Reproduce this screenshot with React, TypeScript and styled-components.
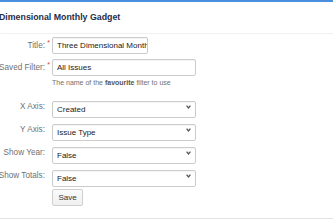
import React from "react";
import styled, { createGlobalStyle } from "styled-components";

const Global = createGlobalStyle`
  html, body { margin: 0; padding: 0; background: #ffffff; }
  body { font-family: "Liberation Sans", Arial, sans-serif; }
  * { box-sizing: border-box; }
`;

const Gadget = styled.div`
  width: 333px;
  height: 222px;
  overflow: hidden;
  display: flex;
  flex-direction: column;
  background: #ffffff;
`;

const Header = styled.div`
  height: 34px;
  flex: none;
  border-top: 2px solid #4a8fdf;
  border-bottom: 1px solid #f0f1f3;
  display: flex;
  align-items: center;
  padding-bottom: 1px;
`;

const Title = styled.h2`
  margin: 0 0 0 -1px;
  font-size: 8.8px;
  font-weight: 700;
  color: #1f2d4a;
  white-space: nowrap;
`;

const Form = styled.form`
  flex: none;
  display: flex;
  flex-direction: column;
  padding: 3px 0 12px 0;
  border-bottom: 1px solid #e2e2e2;
  box-shadow: 0 1px 2px rgba(0, 0, 0, 0.06);
`;

const Row = styled.div<{ $mt?: number }>`
  display: flex;
  align-items: center;
  height: 17px;
  margin-top: ${(p) => p.$mt ?? 0}px;
`;

const Label = styled.label`
  position: relative;
  width: 45px;
  flex: none;
  display: flex;
  justify-content: flex-end;
  font-size: 8.2px;
  line-height: 10px;
  padding-top: 1px;
  color: #707070;
  white-space: nowrap;
  margin-right: 7px;
`;

const Required = styled.span`
  position: absolute;
  right: -5px;
  top: -2px;
  font-size: 7px;
  color: #d04437;
`;

const TextInput = styled.input<{ $w: number }>`
  width: ${(p) => p.$w}px;
  height: 17px;
  border: 1px solid #cccccc;
  border-radius: 2px;
  box-shadow: inset 0 1px 1px rgba(0, 0, 0, 0.05);
  padding: 0 0 0 4px;
  font-family: "Liberation Sans", Arial, sans-serif;
  font-size: 8px;
  color: #222;
  background: #fff;
  outline: none;
`;

const SelectWrap = styled.div`
  position: relative;
  width: 144px;
  height: 17px;
`;

const Select = styled.select`
  appearance: none;
  -webkit-appearance: none;
  width: 100%;
  height: 100%;
  border: 1px solid #cccccc;
  border-radius: 2px;
  box-shadow: inset 0 1px 1px rgba(0, 0, 0, 0.04);
  padding: 0 0 0 4px;
  font-family: "Liberation Sans", Arial, sans-serif;
  font-size: 8px;
  color: #222;
  background: #fff;
  outline: none;
`;

const Chevron = styled.svg`
  position: absolute;
  right: 5px;
  top: 7px;
  width: 5px;
  height: 4px;
  pointer-events: none;
`;

const Help = styled.div`
  margin: 2px 0 0 52px;
  height: 10px;
  line-height: 10px;
  font-size: 7px;
  color: #707070;
  white-space: nowrap;
  b { color: #555; font-weight: 700; }
`;

const Button = styled.button`
  margin-left: 52px;
  width: 31px;
  height: 17px;
  padding: 0;
  border: 1px solid #cfcfcf;
  border-radius: 2px;
  background: linear-gradient(#fafafa, #f0f0f0);
  font-family: "Liberation Sans", Arial, sans-serif;
  font-size: 8px;
  color: #333;
`;

const Footer = styled.div`
  flex: 1;
  background: #ffffff;
`;

const SelectField = ({ value }: { value: string }) => (
  <SelectWrap>
    <Select defaultValue={value}>
      <option>{value}</option>
    </Select>
    <Chevron viewBox="0 0 5 4">
      <path d="M0.6 0.7 L2.5 3 L4.4 0.7" fill="none" stroke="#555" strokeWidth="1.3" />
    </Chevron>
  </SelectWrap>
);

export default function App() {
  return (
    <Gadget>
      <Global />
      <Header>
        <Title>Dimensional Monthly Gadget</Title>
      </Header>
      <Form onSubmit={(e) => e.preventDefault()}>
        <Row>
          <Label>
            Title:<Required>*</Required>
          </Label>
          <TextInput $w={96} defaultValue="Three Dimensional Monthly Gadget" />
        </Row>
        <Row $mt={5}>
          <Label>
            Saved Filter:<Required>*</Required>
          </Label>
          <TextInput $w={144} defaultValue="All Issues" />
        </Row>
        <Help>
          The name of the <b>favourite</b> filter to use
        </Help>
        <Row $mt={10}>
          <Label>X Axis:</Label>
          <SelectField value="Created" />
        </Row>
        <Row $mt={6}>
          <Label>Y Axis:</Label>
          <SelectField value="Issue Type" />
        </Row>
        <Row $mt={6}>
          <Label>Show Year:</Label>
          <SelectField value="False" />
        </Row>
        <Row $mt={6}>
          <Label>Show Totals:</Label>
          <SelectField value="False" />
        </Row>
        <Row $mt={5}>
          <Button type="submit">Save</Button>
        </Row>
      </Form>
      <Footer />
    </Gadget>
  );
}
